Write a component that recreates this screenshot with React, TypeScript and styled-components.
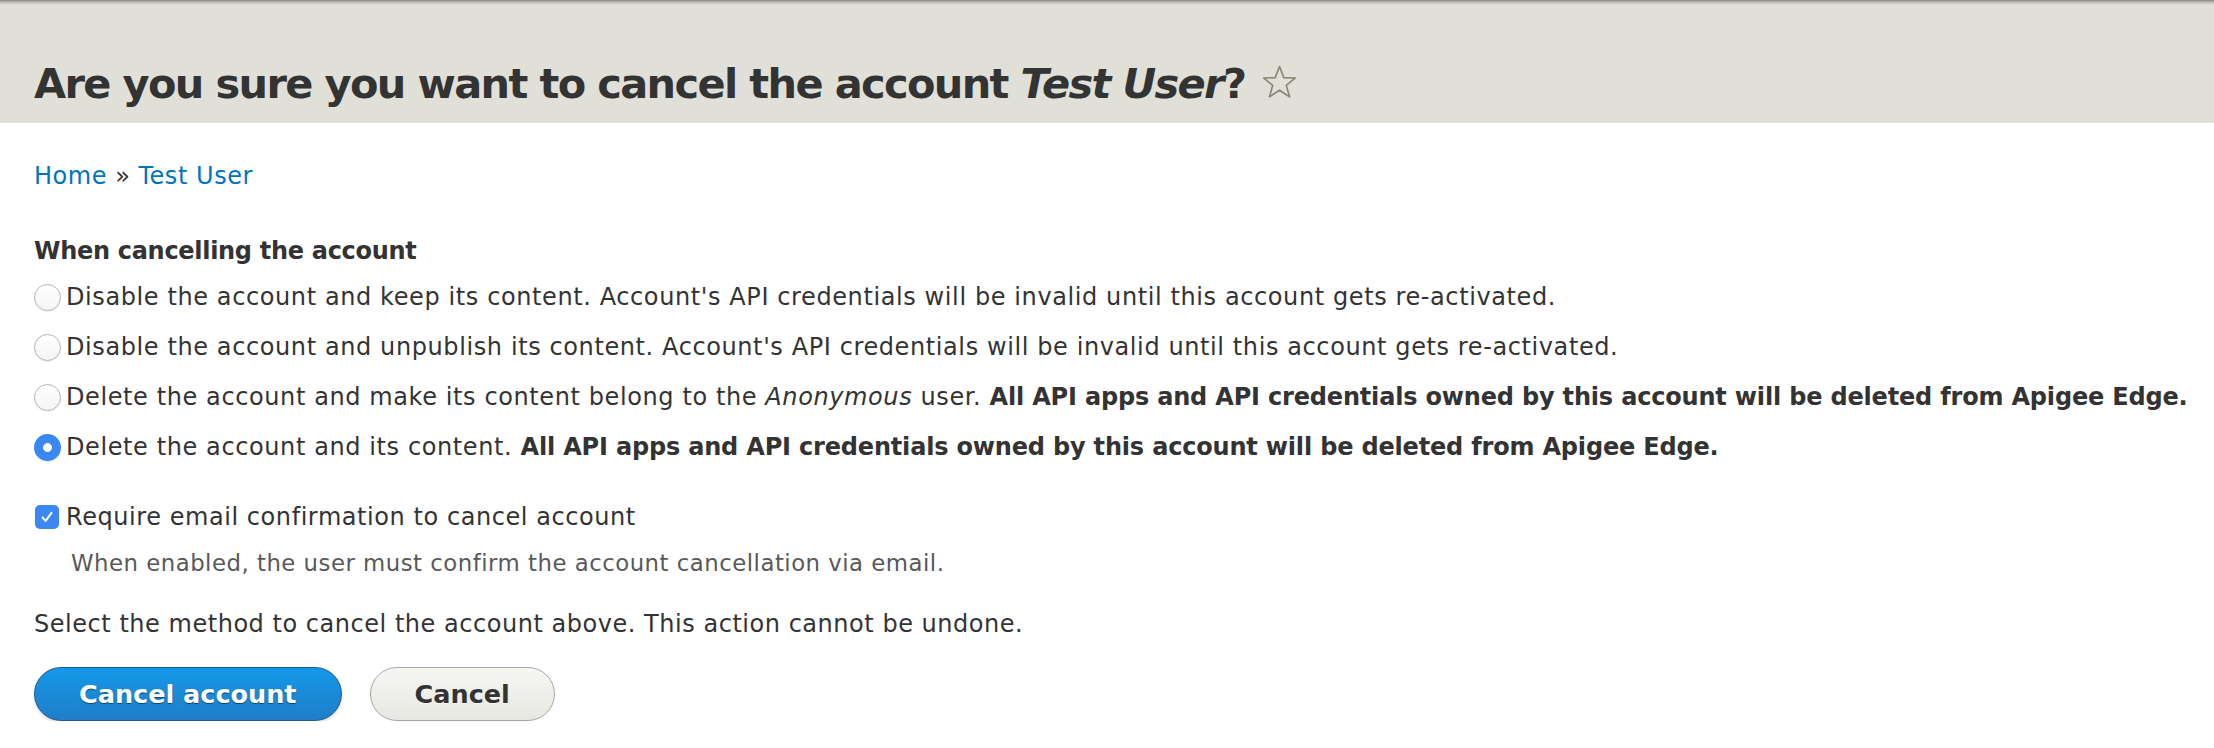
import React from "react";
import styled, { createGlobalStyle } from "styled-components";

const GlobalStyle = createGlobalStyle`
  html, body { margin: 0; padding: 0; background: #fff; }
  body {
    font-family: "DejaVu Sans", "Liberation Sans", sans-serif;
    color: #333;
    font-size: 24px;
    letter-spacing: 0.56px;
  }
`;

const Header = styled.header`
  background: linear-gradient(to bottom, #86867f 0, #b9b9b2 2px, #e0e0d8 5px, #e0e0d8 100%);
  padding: 58px 34px 13px;
`;

const Title = styled.h1`
  margin: 0;
  font-size: 41.5px;
  letter-spacing: -1.65px;
  line-height: 52px;
  font-weight: bold;
  color: #333;
  display: flex;
  align-items: center;
  em { font-style: italic; }
`;

const Star = styled.svg`
  width: 37px;
  height: 37px;
  margin-left: 16px;
  margin-top: -4px;
  flex: none;
`;

const Main = styled.main`
  padding: 36px 34px 0;
  display: flex;
  flex-direction: column;
`;

const Breadcrumb = styled.nav`
  line-height: 34px;
  a { color: #0074bd; text-decoration: none; }
  span { margin: 0 8px; color: #333; }
`;

const Fieldset = styled.div`
  margin-top: 41px;
  display: flex;
  flex-direction: column;
`;

const Legend = styled.div`
  font-weight: bold;
  letter-spacing: -0.3px;
  line-height: 34px;
`;

const RadioList = styled.div`
  margin-top: 12px;
  display: flex;
  flex-direction: column;
  gap: 16px;
`;

const OptionRow = styled.label`
  display: flex;
  align-items: center;
  gap: 5px;
  line-height: 34px;
  white-space: nowrap;
  letter-spacing: 0.6px;
  b { font-weight: bold; letter-spacing: -0.18px; }
  em { font-style: italic; }
`;

const Radio = styled.input.attrs({ type: "radio" })`
  appearance: none;
  margin: 0;
  width: 27px;
  height: 27px;
  border-radius: 50%;
  box-sizing: border-box;
  border: 1px solid #b4b4b4;
  background: linear-gradient(to bottom, #ffffff, #f4f4f4);
  box-shadow: 0 1px 1px rgba(0, 0, 0, 0.08);
  flex: none;
  &:checked {
    border: none;
    background: radial-gradient(circle, #ffffff 0 4px, #3b87f5 4.8px);
  }
`;

const CheckRow = styled.div`
  margin-top: 36px;
  display: flex;
  align-items: center;
  gap: 7px;
  line-height: 34px;
  padding-left: 1px;
`;

const CheckBox = styled.span`
  width: 24px;
  height: 24px;
  border-radius: 5px;
  background: #3b87f5;
  display: inline-flex;
  align-items: center;
  justify-content: center;
  flex: none;
`;

const Description = styled.div`
  margin-top: 12px;
  padding-left: 37px;
  font-size: 22.8px;
  letter-spacing: 0.5px;
  line-height: 34px;
  color: #595959;
`;

const Note = styled.p`
  margin: 27px 0 0;
  line-height: 34px;
  letter-spacing: 0.53px;
`;

const Actions = styled.div`
  margin-top: 26px;
  display: flex;
  gap: 28px;
  align-items: center;
`;

const Button = styled.button<{ $primary?: boolean }>`
  height: 54px;
  box-sizing: border-box;
  border-radius: 30px;
  font-family: "DejaVu Sans", "Liberation Sans", sans-serif;
  font-weight: bold;
  font-size: 25.5px;
  letter-spacing: 0;
  padding: 0 44px;
  cursor: pointer;
  border: 1px solid ${(p) => (p.$primary ? "#1e5b8d" : "#a6a6a6")};
  color: ${(p) => (p.$primary ? "#fff" : "#333")};
  background: ${(p) =>
    p.$primary
      ? "linear-gradient(to bottom, #1598ea, #1f7ec7)"
      : "linear-gradient(to bottom, #f6f6f3, #e7e7e2)"};
  text-shadow: ${(p) => (p.$primary ? "0 1px 1px rgba(0,0,0,0.5)" : "0 1px rgba(255,255,255,0.6)")};
  box-shadow: ${(p) => (p.$primary ? "0 2px 3px rgba(0,0,0,0.15)" : "none")};
`;

const options = [
  "Disable the account and keep its content. Account's API credentials will be invalid until this account gets re-activated.",
  "Disable the account and unpublish its content. Account's API credentials will be invalid until this account gets re-activated.",
];

export default function App() {
  return (
    <>
      <GlobalStyle />
      <Header>
        <Title>
          <span>
            Are you sure you want to cancel the account <em>Test User</em>?
          </span>
          <Star viewBox="0 0 36 36">
            <path
              d="M18 2.5 L22.2 13.3 L33.5 13.6 L24.6 20.7 L27.8 32 L18 25.5 L8.2 32 L11.4 20.7 L2.5 13.6 L13.8 13.3 Z"
              fill="none"
              stroke="#8a8670"
              strokeWidth="1.6"
              strokeLinejoin="round"
            />
          </Star>
        </Title>
      </Header>
      <Main>
        <Breadcrumb>
          <a href="#">Home</a>
          <span>»</span>
          <a href="#">Test User</a>
        </Breadcrumb>
        <Fieldset>
          <Legend>When cancelling the account</Legend>
          <RadioList>
            {options.map((text, i) => (
              <OptionRow key={i}>
                <Radio name="method" />
                {text}
              </OptionRow>
            ))}
            <OptionRow>
              <Radio name="method" />
              <span>
                Delete the account and make its content belong to the <em>Anonymous</em> user.{" "}
                <b>All API apps and API credentials owned by this account will be deleted from Apigee Edge.</b>
              </span>
            </OptionRow>
            <OptionRow>
              <Radio name="method" defaultChecked />
              <span>
                Delete the account and its content.{" "}
                <b>All API apps and API credentials owned by this account will be deleted from Apigee Edge.</b>
              </span>
            </OptionRow>
          </RadioList>
        </Fieldset>
        <CheckRow>
          <CheckBox>
            <svg width="16" height="16" viewBox="0 0 16 16">
              <path d="M3.5 8.5 L6.6 11.8 L12.5 3.8" fill="none" stroke="#fff" strokeWidth="2" strokeLinecap="round" strokeLinejoin="round" />
            </svg>
          </CheckBox>
          <span>Require email confirmation to cancel account</span>
        </CheckRow>
        <Description>When enabled, the user must confirm the account cancellation via email.</Description>
        <Note>Select the method to cancel the account above. This action cannot be undone.</Note>
        <Actions>
          <Button $primary>Cancel account</Button>
          <Button>Cancel</Button>
        </Actions>
      </Main>
    </>
  );
}
